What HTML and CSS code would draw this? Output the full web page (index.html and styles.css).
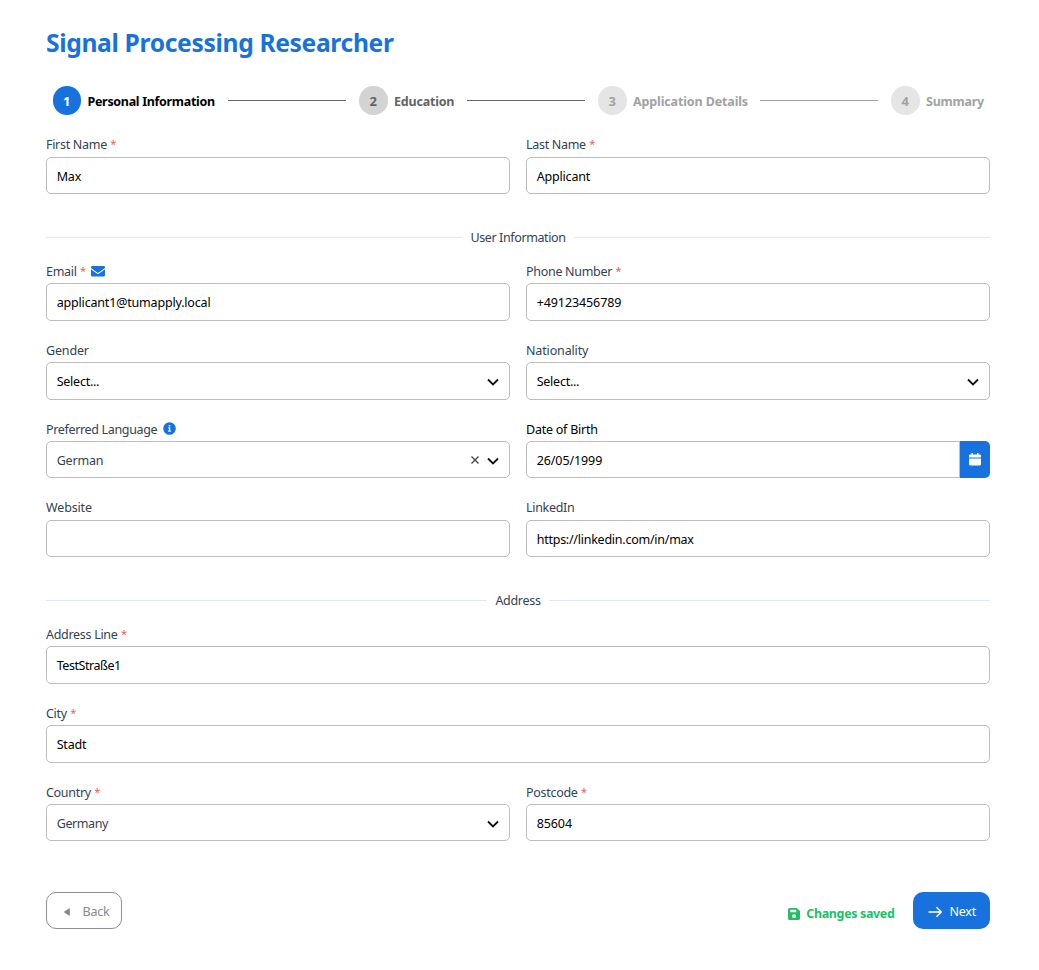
FILE: index.html
```html
<!DOCTYPE html>
<html lang="en">
<head>
<meta charset="utf-8">
<title>Signal Processing Researcher</title>
<link rel="stylesheet" href="styles.css">
</head>
<body>
<main class="page">
  <h1 class="title">Signal Processing Researcher</h1>
  <nav class="stepper">
    <div class="step active"><span class="num">1</span><span class="name personal">Personal Information</span></div>
    <i class="line"></i>
    <div class="step"><span class="num">2</span><span class="name education">Education</span></div>
    <i class="line"></i>
    <div class="step disabled"><span class="num">3</span><span class="name details">Application Details</span></div>
    <i class="line faded"></i>
    <div class="step disabled"><span class="num">4</span><span class="name summary">Summary</span></div>
  </nav>
  <section class="grid">
    <div class="field"><label>First Name <b>*</b></label><div class="input">Max</div></div>
    <div class="field"><label>Last Name <b>*</b></label><div class="input">Applicant</div></div>
  </section>
  <div class="divider"><span>User Information</span></div>
  <section class="grid">
    <div class="field"><label>Email <b>*</b><svg class="mail" viewBox="0 0 14 11"><path fill="currentColor" d="M1.400 0h11.200A1.400 1.400 0 0 1 14 1.400v.5L7.800 6.400a1.400 1.400 0 0 1-1.600 0L0 1.900v-.5A1.400 1.400 0 0 1 1.400 0ZM0 3.300l5.500 4a2.600 2.600 0 0 0 3 0l5.500-4v5.900A1.400 1.400 0 0 1 12.600 10.600H1.400A1.400 1.400 0 0 1 0 9.200Z"/></svg></label><div class="input">applicant1@tumapply.local</div></div>
    <div class="field"><label>Phone Number <b>*</b></label><div class="input digits">+49123456789</div></div>
    <div class="field"><label class="plain">Gender</label><div class="input select">Select...<svg class="chevron" viewBox="0 0 14 14"><path d="m2 4.500 5 5 5-5"/></svg></div></div>
    <div class="field"><label class="plain">Nationality</label><div class="input select">Select...<svg class="chevron" viewBox="0 0 14 14"><path d="m2 4.500 5 5 5-5"/></svg></div></div>
    <div class="field"><label class="language">Preferred Language<svg class="info" viewBox="0 0 13 13"><circle cx="6.500" cy="6.500" r="6.300" fill="currentColor"/><path fill="#fff" fill-opacity=".85" d="M5.700 2.900h1.600v1.500H5.700zM5.200 5.300h2.100v3.300H8v1.100H5V8.600h.9V6.400h-.7z"/></svg></label><div class="input muted">German<svg class="clear" viewBox="0 0 10 10"><path d="m1.500 1.500 7 7m0-7-7 7"/></svg><svg class="chevron after" viewBox="0 0 14 14"><path d="m2 4.500 5 5 5-5"/></svg></div></div>
    <div class="field"><label class="dark">Date of Birth</label><div class="date"><div class="input digits">26/05/1999</div><span class="calendar"><svg viewBox="0 0 12 13"><path fill="#fff" d="M2.500 0H4v1.600h4V0h1.500v1.600h1.200c.7 0 1.300.5 1.300 1.200V4H0V2.800c0-.7.600-1.200 1.300-1.200h1.200zM0 6h12v5.300c0 .7-.6 1.200-1.300 1.200H1.300C.6 12.500 0 12 0 11.300z"/><path fill="#8bb8ef" d="M0 4h12v2H0z"/></svg></span></div></div>
    <div class="field"><label class="plain">Website</label><div class="input"></div></div>
    <div class="field"><label>LinkedIn</label><div class="input url">https://linkedin.com/in/max</div></div>
  </section>
  <div class="divider address"><span>Address</span></div>
  <section class="grid">
    <div class="field wide"><label>Address Line <b>*</b></label><div class="input street">TestStraße1</div></div>
    <div class="field wide"><label>City <b>*</b></label><div class="input">Stadt</div></div>
    <div class="field"><label>Country <b>*</b></label><div class="input muted country">Germany<svg class="chevron" viewBox="0 0 14 14"><path d="m2 4.500 5 5 5-5"/></svg></div></div>
    <div class="field"><label>Postcode <b>*</b></label><div class="input digits">85604</div></div>
  </section>
  <footer class="actions">
    <button class="back"><svg viewBox="0 0 6 8"><path fill="currentColor" d="M5.800 0v8L.6 4.700a.8.8 0 0 1 0-1.400z"/></svg>Back</button>
    <div class="saved"><svg viewBox="0 0 12 12"><path fill="currentColor" fill-rule="evenodd" d="M1.500 0h7.300L12 3.100v7.400c0 .8-.7 1.500-1.500 1.500h-9C.7 12 0 11.300 0 10.500v-9C0 .7.700 0 1.500 0ZM2.300 1.800v2.500h6V1.800ZM6 6.300a1.900 1.900 0 1 0 0 3.800 1.900 1.900 0 0 0 0-3.800Z"/></svg>Changes saved</div>
    <button class="next"><svg viewBox="0 0 14 12"><path d="M.5 6h12.500M8.500 1.300 13.200 6l-4.700 4.700"/></svg>Next</button>
  </footer>
</main>
</body>
</html>
```
FILE: styles.css
```css
* { box-sizing: border-box; }
body { margin: 0; background: #fff; color: #000; font: 12.5px/20px "Noto Sans", "Open Sans", sans-serif; letter-spacing: -.18px; }
.page { width: 944px; margin: 0 0 0 46px; padding-top: 26px; }
.title { margin: 0; height: 60px; font-size: 24.6px; line-height: 34px; font-weight: 700; color: #1872dd; letter-spacing: -.33px; white-space: nowrap; }
.stepper { display: flex; align-items: center; height: 29px; margin-bottom: 21px; padding: 0 6.500px; justify-content: space-between; }
.step { display: flex; align-items: center; gap: 6.500px; font-weight: 700; color: #646464; }
.num { width: 28.500px; height: 28.500px; border-radius: 50%; background: #d3d3d3; text-align: center; line-height: 30px; font-size: 13px; letter-spacing: 0; }
.name { white-space: nowrap; padding-top: 2px; }
.personal { width: 128px; letter-spacing: -.31px; }
.education { width: 60.500px; letter-spacing: -.2px; }
.details { width: 114.500px; letter-spacing: -.13px; }
.summary { width: 57.500px; letter-spacing: -.24px; }
.active { color: #000; }
.active .num { background: #1872dd; color: #fff; }
.disabled { color: #a2a2a2; }
.disabled .num { background: #e5e5e5; }
.line { width: 118px; height: 1px; background: #666; }
.faded { background: #a2a2a2; }
.grid { display: grid; grid-template-columns: 1fr 1fr; column-gap: 16px; row-gap: 20.600px; }
.wide { grid-column: 1 / -1; }
.field label { display: flex; align-items: center; height: 21px; padding-bottom: 2.100px; color: #334155; white-space: pre; letter-spacing: -.3px; }
.field label.plain { letter-spacing: -.15px; }
.field label.dark { color: #000; letter-spacing: -.24px; }
.field label.language { letter-spacing: -.34px; }
label b { margin-left: .5px; padding-bottom: 2px; color: #f25a5a; font-size: 11px; font-weight: 400; }
.input { display: flex; align-items: center; height: 37.250px; padding: 2px 9.500px 0 9.700px; border: 1px solid #bdbdbd; border-radius: 5px; }
.muted { color: #334155; }
.digits { letter-spacing: -.1px; }
.select, .url { letter-spacing: -.25px; }
.street { letter-spacing: -.45px; }
.country { letter-spacing: -.4px; }
.mail { width: 14px; height: 11px; margin-left: 5px; color: #1872dd; }
.info { width: 13px; height: 13px; margin: 0 0 2px 5.500px; color: #1872dd; }
.chevron { width: 14px; height: 14px; margin-left: auto; fill: none; stroke: #111; stroke-width: 1.800; }
.clear { width: 10px; height: 10px; margin-left: auto; margin-bottom: 2px; fill: none; stroke: #444; stroke-width: 1.300; }
.chevron.after { margin-left: 6px; }
.date { display: flex; }
.date .input { flex: 1; border-radius: 5px 0 0 5px; }
.calendar { display: flex; align-items: center; justify-content: center; width: 30px; height: 37.250px; background: #1872dd; border-radius: 0 5px 5px 0; }
.calendar svg { width: 12px; height: 13px; }
.divider { display: flex; align-items: center; gap: 8.500px; height: 20px; margin: 33.300px 0 14.900px; color: #334155; letter-spacing: -.38px; }
.divider::before, .divider::after { content: ""; flex: 1; height: 1px; background: #e2e8f0; }
.divider span { padding-top: 1px; }
.address { letter-spacing: -.3px; }
.actions { display: flex; height: 37px; margin-top: 50.700px; align-items: center; }
button { display: flex; align-items: center; height: 37px; border-radius: 10px; font: inherit; letter-spacing: -.25px; }
.back { width: 76px; padding: 2px 0 0 17px; gap: 12.500px; border: 1px solid #909090; background: #fff; color: #888; }
.back svg { width: 6px; height: 8px; }
.saved { display: flex; align-items: center; gap: 6px; margin-left: auto; padding-top: 6px; color: #22bf66; font-weight: 700; letter-spacing: -.36px; }
.saved svg { width: 12px; height: 12px; }
.next { width: 77px; margin-left: 18.500px; padding: 2px 0 0 15px; gap: 7.500px; border: 0; background: #1872dd; color: #fff; }
.next svg { width: 14px; height: 12px; fill: none; stroke: #fff; stroke-width: 1.500; }
```
